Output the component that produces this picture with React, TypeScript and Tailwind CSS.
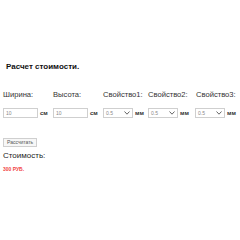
const font = { fontFamily: '"Liberation Sans", Arial, sans-serif' }

function Chevron() {
  return (
    <svg width="6" height="4" viewBox="0 0 6 4" className="shrink-0">
      <path d="M0.5 0.5 L3 3.2 L5.5 0.5" fill="none" stroke="#555" strokeWidth="0.9" />
    </svg>
  )
}

function TextBox({ value }: { value: string }) {
  return (
    <div className="w-[35px] h-[10px] border border-[#cfcfcf] bg-white flex items-center px-[2px] text-[5px] leading-none text-[#888]">
      {value}
    </div>
  )
}

function SelectBox({ width }: { width: string }) {
  return (
    <div className={`${width} h-[10px] border border-[#cfcfcf] bg-white flex items-center justify-between px-[2px] text-[5px] leading-none text-[#888]`}>
      <span>0.5</span>
      <Chevron />
    </div>
  )
}

function Unit({ children }: { children: string }) {
  return <span className="text-[6px] leading-none font-bold text-[#333] ml-[2px]">{children}</span>
}

export default function App() {
  return (
    <div className="w-[240px] h-[240px] bg-white text-[#222] overflow-hidden flex flex-col" style={font}>
      <div className="pt-[62px] pl-[6px] text-[8px] leading-[10px] font-bold text-[#111]">Расчет стоимости.</div>

      <div className="flex mt-[18px] pl-[3px] text-[7.6px] leading-[10px] text-[#333]">
        <div className="w-[50px]">Ширина:</div>
        <div className="w-[50px]">Высота:</div>
        <div className="w-[45px]">Свойство1:</div>
        <div className="w-[48px]">Свойство2:</div>
        <div>Свойство3:</div>
      </div>

      <div className="flex items-center mt-[8px] pl-[3px]">
        <div className="w-[50px] flex items-center">
          <TextBox value="10" />
          <Unit>см</Unit>
        </div>
        <div className="w-[50px] flex items-center">
          <TextBox value="10" />
          <Unit>см</Unit>
        </div>
        <div className="w-[45px] flex items-center">
          <SelectBox width="w-[30px]" />
          <Unit>мм</Unit>
        </div>
        <div className="w-[47px] flex items-center">
          <SelectBox width="w-[30px]" />
          <Unit>мм</Unit>
        </div>
        <div className="flex items-center">
          <SelectBox width="w-[30px]" />
          <Unit>мм</Unit>
        </div>
      </div>

      <div className="flex mt-[20px] pl-[3px]">
        <button className="h-[9px] px-[3px] border border-[#cfcfcf] bg-[#f7f7f7] text-[5px] text-[#555] leading-none">
          Рассчитать
        </button>
      </div>
      <div className="pl-[3px] mt-[4px] text-[8px] leading-[10px] text-[#222]">Стоимость:</div>
      <div className="pl-[3px] mt-[5px] text-[5px] leading-[6px] font-bold text-[#f24444]">300 РУБ.</div>
    </div>
  )
}
